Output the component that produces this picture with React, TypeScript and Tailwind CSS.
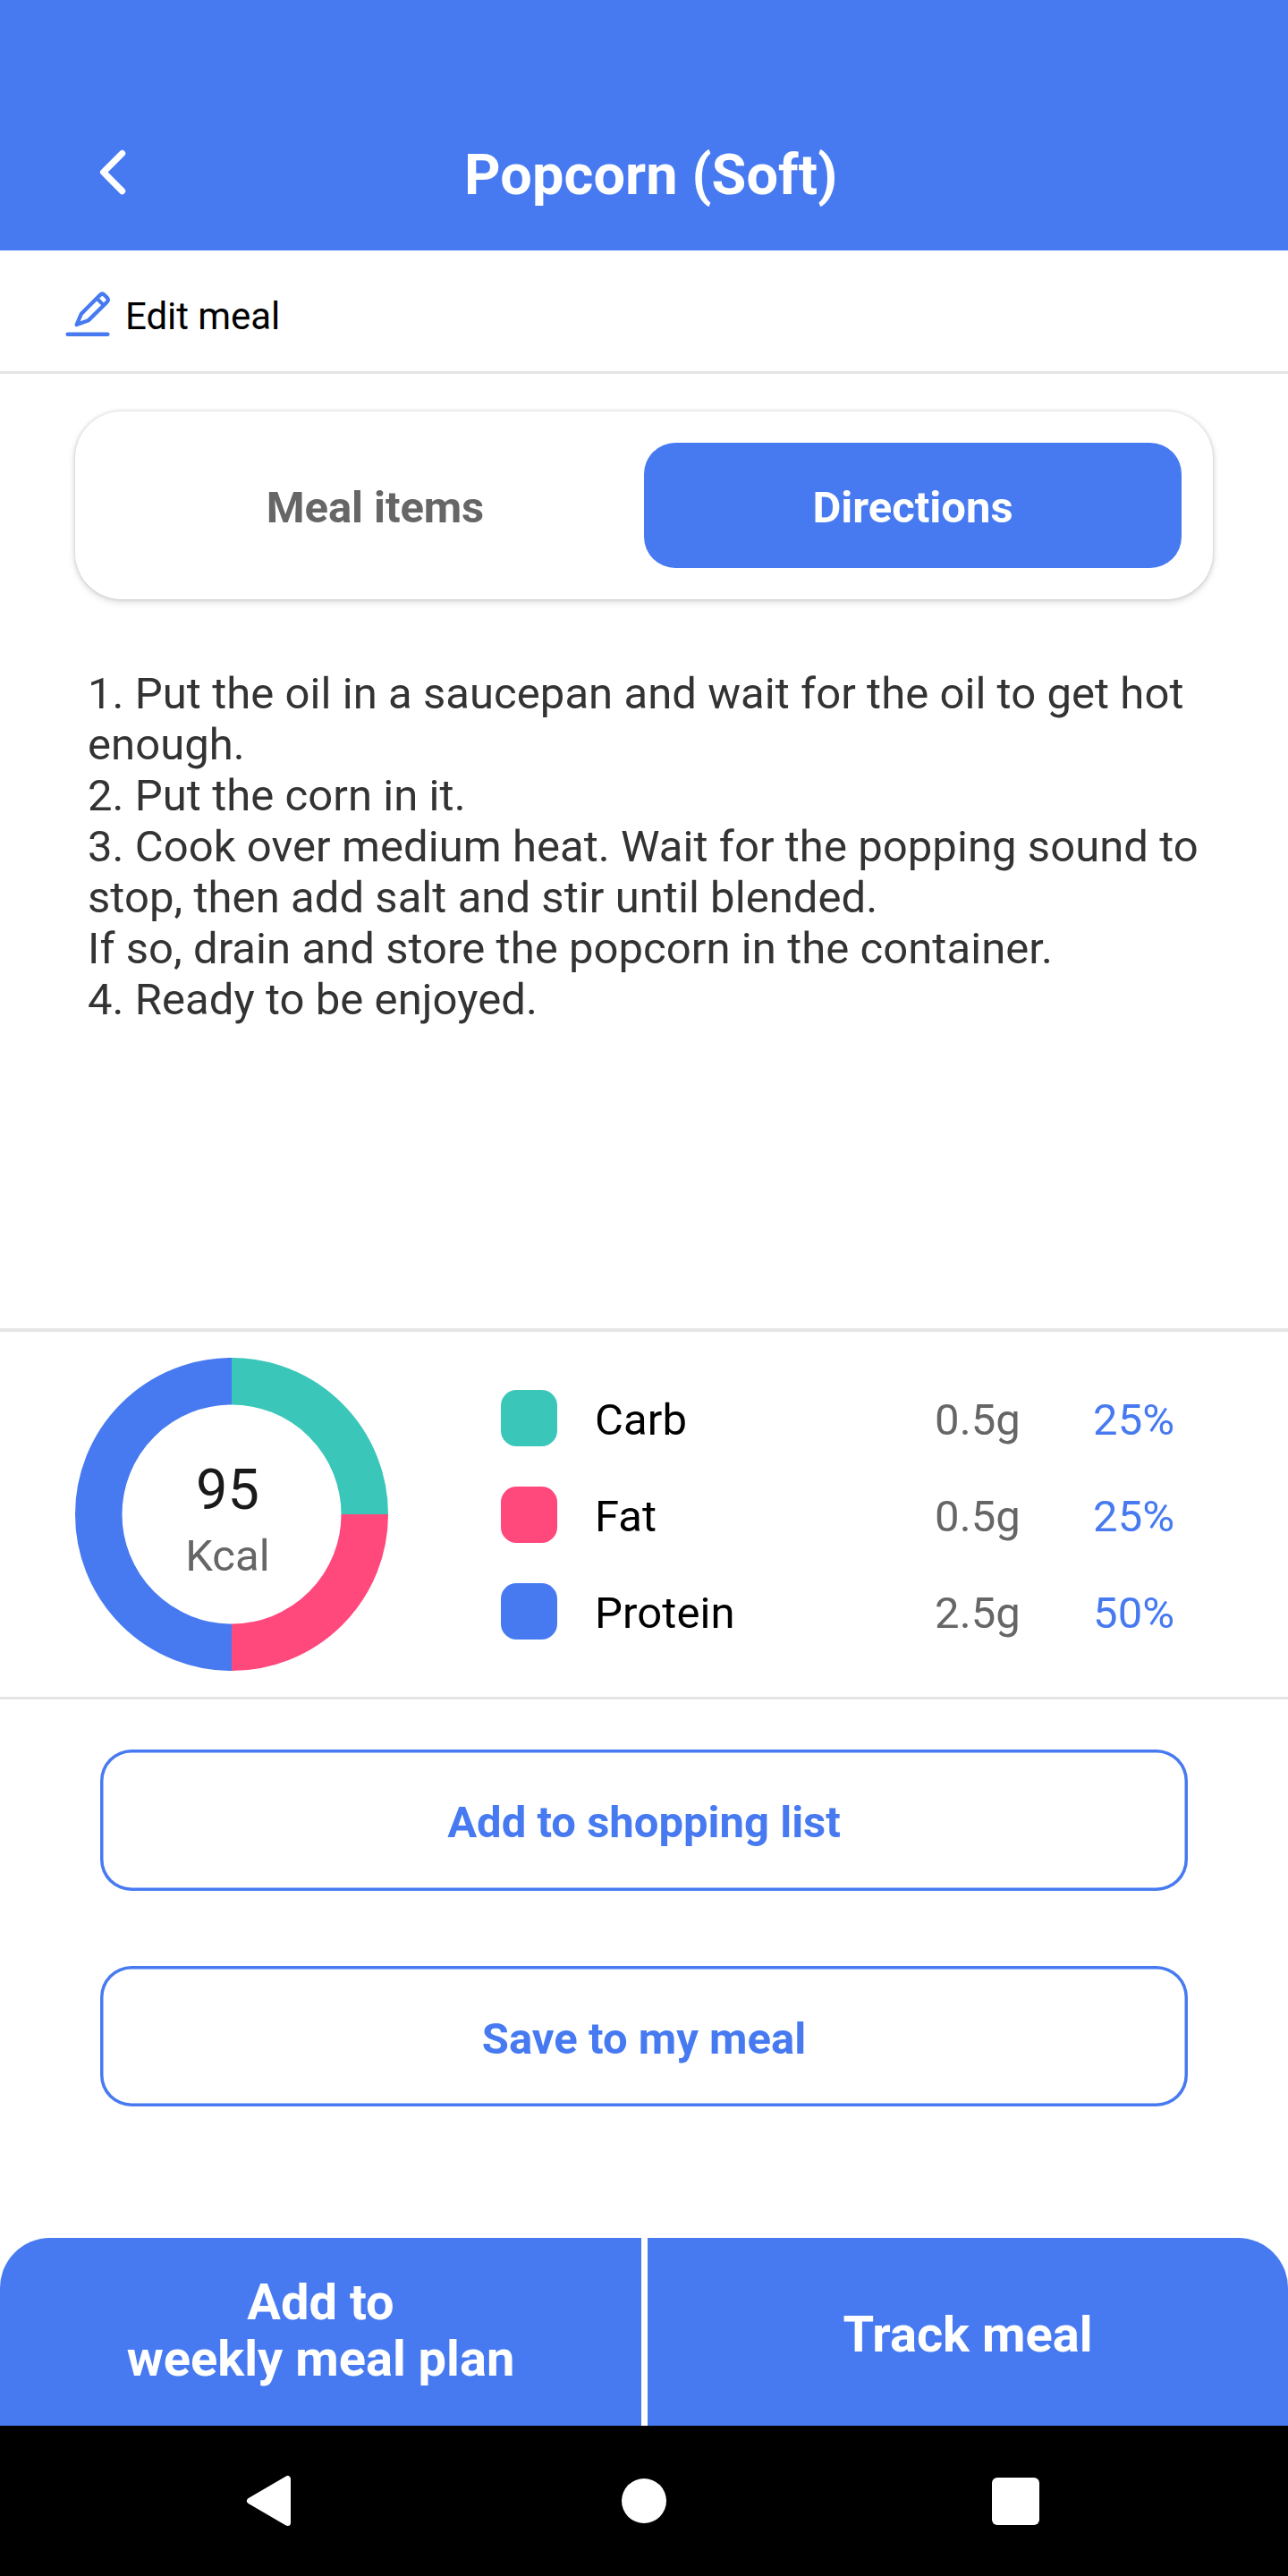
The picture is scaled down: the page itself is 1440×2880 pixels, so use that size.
import React from "react";

const directions = [
  "1. Put the oil in a saucepan and wait for the oil to get hot enough.",
  "2. Put the corn in it.",
  "3. Cook over medium heat. Wait for the popping sound to stop, then add salt and stir until blended.",
  "If so, drain and store the popcorn in the container.",
  "4. Ready to be enjoyed.",
];

const macros = [
  { name: "Carb", grams: "0.5g", percent: "25%", swatch: "bg-[#3bc6ba]" },
  { name: "Fat", grams: "0.5g", percent: "25%", swatch: "bg-[#ff487c]" },
  { name: "Protein", grams: "2.5g", percent: "50%", swatch: "bg-[#477af1]" },
];

function Header() {
  return (
    <header className="flex h-[280px] items-start bg-[#477af1] pt-[151px]">
      <svg className="ml-[98px] mt-0.5 h-20 w-14 shrink-0" viewBox="98 153 56 80" fill="none">
        <path
          d="M136.6 171.5 115.6 192.5 136.6 213.6"
          stroke="#fff"
          strokeWidth="7.2"
          strokeLinecap="round"
          strokeLinejoin="round"
        />
      </svg>
      <h1 className="ml-[138px] flex-1 pl-[227px] text-[63px] font-bold leading-[90px] tracking-[0.1px] text-white">
        Popcorn (Soft)
      </h1>
    </header>
  );
}

function EditRow() {
  return (
    <div className="flex h-[138px] items-start border-b-[3px] border-[#e5e5e5] pl-[72px]">
      <svg className="mt-[45px] h-[52px] w-[52px]" viewBox="216 675 156 156" fill="none" stroke="#477af1">
        <path
          d="M257 789 273 752 335 690Q343 682 351 690L359 698Q366 706 358 714L296 775Z"
          strokeWidth="13"
          strokeLinejoin="round"
        />
        <path d="M326 702 346 722" strokeWidth="12" />
        <path d="M227 821H361" strokeWidth="13.5" strokeLinecap="round" />
      </svg>
      <span className="ml-4 mt-11 text-[42px] leading-[60px] tracking-[-0.05px] text-black">Edit meal</span>
    </div>
  );
}

function Tabs() {
  return (
    <div className="mx-[84px] mt-[42px] flex h-[210px] rounded-[52px] bg-white p-[35px] text-[49px] font-bold shadow-[0_3px_8px_rgba(0,0,0,0.14),0_0_4px_rgba(0,0,0,0.16)]">
      <button className="flex flex-1 items-center justify-center pt-1.5 tracking-[-0.1px] text-[#666]">
        Meal items
      </button>
      <button className="flex flex-1 items-center justify-center rounded-[35px] bg-[#477af1] pt-1.5 text-white">
        Directions
      </button>
    </div>
  );
}

function Donut() {
  return (
    <div className="relative h-[350px] w-[350px]">
      <svg className="h-full w-full" viewBox="-175 -175 350 350" fill="none" strokeWidth="52.5">
        <path d="M0-148.75A148.75 148.75 0 0 1 148.75 0" stroke="#3bc6ba" />
        <path d="M148.75 0A148.75 148.75 0 0 1 0 148.75" stroke="#ff487c" />
        <path d="M0 148.75A148.75 148.75 0 0 1 0-148.75" stroke="#477af1" />
      </svg>
      <div className="absolute inset-0 flex flex-col items-center pr-[9px] pt-[110px]">
        <span className="text-[63px] leading-[75px] text-[#1a1a1a]">95</span>
        <span className="mt-[8px] text-[49px] leading-[58px] tracking-[0.1px] text-[#666]">Kcal</span>
      </div>
    </div>
  );
}

function Nutrition() {
  return (
    <section className="flex h-[415px] border-b-[3px] border-t-4 border-[#e5e5e5] pl-[84px] pt-[29px]">
      <Donut />
      <div className="ml-[126px] mt-9 flex flex-col gap-[45px] text-[49px] leading-[63px] tracking-[0.1px]">
        {macros.map((m) => (
          <div key={m.name} className="flex h-[63px]">
            <span className={`h-[63px] w-[63px] rounded-[17.5px] ${m.swatch}`} />
            <span className="ml-[42px] mt-0.5 w-[380px] text-black">{m.name}</span>
            <span className="mt-0.5 w-[177px] text-[#666]">{m.grams}</span>
            <span className="mt-0.5 text-[#477af1]">{m.percent}</span>
          </div>
        ))}
      </div>
    </section>
  );
}

function OutlineButton({ children }: { children: React.ReactNode }) {
  return (
    <button className="flex h-[157.5px] items-center justify-center rounded-[35px] pt-1.5 text-[49px] font-bold text-[#477af1] shadow-[inset_0_0_0_3.5px_#477af1]">
      {children}
    </button>
  );
}

function BottomActions() {
  return (
    <div className="flex h-[210px] gap-[7px] text-center text-[56px] font-bold leading-[63px] text-white">
      <button className="flex w-[717px] items-center justify-center rounded-tl-[56px] bg-[#477af1] pb-[3px]">
        <span>
          Add to
          <br />
          weekly meal plan
        </span>
      </button>
      <button className="flex w-[716px] items-center justify-center rounded-tr-[56px] bg-[#477af1] pt-1.5">
        Track meal
      </button>
    </div>
  );
}

function SystemNav() {
  return (
    <nav className="flex h-[168px] items-center bg-black pl-[272px] pr-[275px]">
      <svg className="h-[60px] w-[60px]" viewBox="272 2766 60 60">
        <path
          d="M321.5 2771.5V2820.5L279.5 2796Z"
          fill="#fff"
          stroke="#fff"
          strokeWidth="7"
          strokeLinejoin="round"
        />
      </svg>
      <span className="ml-[363px] h-[50px] w-[50px] rounded-full bg-white" />
      <span className="ml-[363.5px] h-[53px] w-[53px] shrink-0 rounded-md bg-white" />
    </nav>
  );
}

export default function App() {
  return (
    <div className="flex h-[2880px] w-[1440px] flex-col overflow-hidden bg-white font-['Roboto',sans-serif]">
      <Header />
      <EditRow />
      <Tabs />
      <div className="mt-[77px] h-[738px] pl-[98px] pr-[84px] text-[49px] leading-[57px] tracking-[0.06px] text-[#333]">
        {directions.map((line) => (
          <p key={line}>{line}</p>
        ))}
      </div>
      <Nutrition />
      <div className="mt-14 flex flex-1 flex-col gap-[84px] px-[112px]">
        <OutlineButton>Add to shopping list</OutlineButton>
        <OutlineButton>Save to my meal</OutlineButton>
      </div>
      <BottomActions />
      <SystemNav />
    </div>
  );
}
